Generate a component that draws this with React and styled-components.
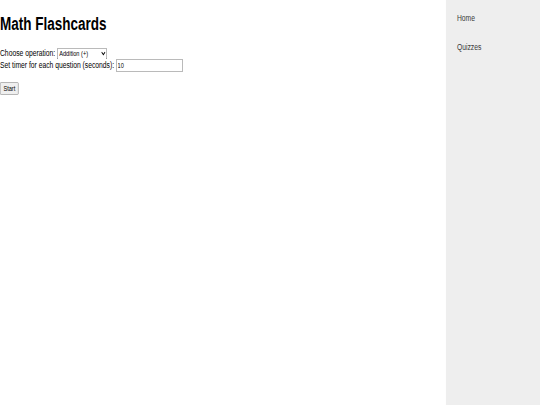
import React from "react";
import styled, { createGlobalStyle } from "styled-components";

const GlobalStyle = createGlobalStyle`
  html, body {
    margin: 0;
    padding: 0;
    background: #ffffff;
    overflow: hidden;
  }
  body {
    font-family: "Liberation Sans", Arial, sans-serif;
  }
`;

const Viewport = styled.div`
  width: 540px;
  height: 405px;
  overflow: hidden;
`;

const Stage = styled.div`
  width: 1280px;
  height: 675px;
  display: flex;
  transform: scale(0.421875, 0.6);
  transform-origin: 0 0;
  font-family: "Liberation Sans", Arial, sans-serif;
  font-size: 16px;
  color: #000;
`;

const Main = styled.main`
  flex: 1;
  background: #ffffff;
`;

const Title = styled.h1`
  font-size: 32px;
  font-weight: bold;
  margin: 21.44px 0;
`;

const Row = styled.div`
  display: block;
`;

const Select = styled.select`
  font-family: "Liberation Sans", Arial, sans-serif;
  font-size: 13.33px;
  width: 119px;
`;

const Input = styled.input`
  font-family: "Liberation Sans", Arial, sans-serif;
  font-size: 13.33px;
  width: 159px;
  box-sizing: border-box;
`;

const Button = styled.button`
  font-family: "Liberation Sans", Arial, sans-serif;
  font-size: 13.33px;
  margin-top: 17px;
`;

const Sidebar = styled.nav`
  width: 223px;
  background: #eeeeee;
  padding-top: 6px;
  box-sizing: border-box;
`;

const NavLink = styled.a`
  display: block;
  padding: 15px 26px;
  color: #3a3a3a;
  text-decoration: none;
  font-size: 16px;
`;

export default function App() {
  return (
    <>
      <GlobalStyle />
      <Viewport>
        <Stage>
          <Main>
            <Title>Math Flashcards</Title>
            <Row>
              Choose operation:{" "}
              <Select defaultValue="add">
                <option value="add">Addition (+)</option>
                <option value="sub">Subtraction (-)</option>
                <option value="mul">Multiplication (×)</option>
                <option value="div">Division (÷)</option>
              </Select>
            </Row>
            <Row>
              Set timer for each question (seconds):{" "}
              <Input type="number" defaultValue={10} />
            </Row>
            <Button>Start</Button>
          </Main>
          <Sidebar>
            <NavLink href="#">Home</NavLink>
            <NavLink href="#">Quizzes</NavLink>
          </Sidebar>
        </Stage>
      </Viewport>
    </>
  );
}
